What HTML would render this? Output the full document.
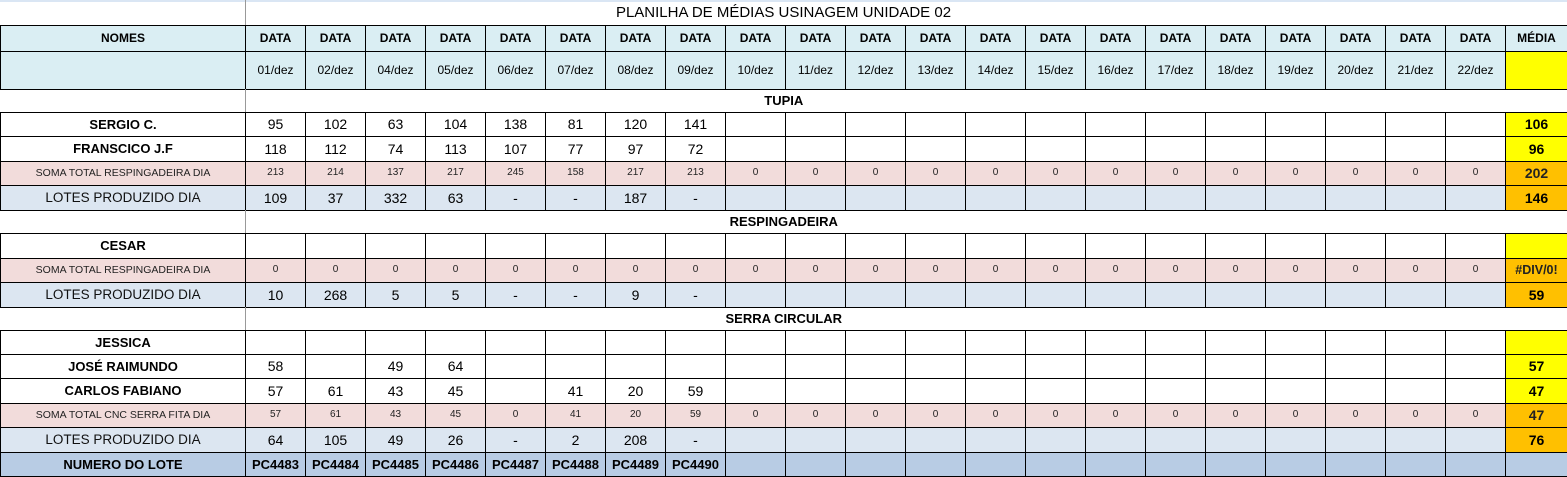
<!DOCTYPE html>
<html><head><meta charset="utf-8"><style>
*{margin:0;padding:0;box-sizing:border-box}
body{width:1567px;height:476px;overflow:hidden;background:#fff;font-family:"Liberation Sans",Arial,sans-serif;color:#000;position:relative}
table{border-collapse:collapse;table-layout:fixed;width:1567px;position:absolute;left:0;top:0}
td{border:1px solid #000;padding:0;text-align:center;vertical-align:middle;line-height:1;overflow:hidden;white-space:nowrap;font-size:14px}
.t td{border:none}
.h td{background:#DAEEF3;font-weight:bold;font-size:12px}
.d td{background:#DAEEF3;font-size:12px}
.sec td{border-left:none;border-right:none;font-weight:bold;font-size:13px}
.n td:first-child{font-weight:bold;font-size:13px}
.s td{background:#F2DCDB;font-size:10px;color:#222}
.s td:first-child{font-size:10.5px}
.l td{background:#DCE6F1;font-size:14px}
.l td:first-child{font-size:13.5px;color:#111}
.nl td{background:#B8CCE4;font-weight:bold;font-size:13px}
td.y{background:#FFFF00 !important;font-weight:bold;font-size:14px}
td.o{background:#FFC000 !important;font-weight:bold;font-size:14px}
td.o.sm{font-size:12.5px}
.vl{position:absolute;left:245px;width:1px;background:#999}
.title{position:absolute;left:0;width:1567px;top:5px;text-align:center;font-size:15px;line-height:16px}
</style></head><body>
<div style="position:absolute;left:0;top:0;width:1567px;height:2px;background:#DAE6F4"></div>
<table>
<colgroup><col style="width:245px"><col span="21" style="width:60px"><col style="width:62px"></colgroup>
<tr class="t" style="height:25px"><td colspan="22"></td><td style="border-right:1px solid #000"></td></tr>
<tr class="h" style="height:26px"><td>NOMES</td><td>DATA</td><td>DATA</td><td>DATA</td><td>DATA</td><td>DATA</td><td>DATA</td><td>DATA</td><td>DATA</td><td>DATA</td><td>DATA</td><td>DATA</td><td>DATA</td><td>DATA</td><td>DATA</td><td>DATA</td><td>DATA</td><td>DATA</td><td>DATA</td><td>DATA</td><td>DATA</td><td>DATA</td><td>MÉDIA</td></tr>
<tr class="d" style="height:38px"><td></td><td>01/dez</td><td>02/dez</td><td>04/dez</td><td>05/dez</td><td>06/dez</td><td>07/dez</td><td>08/dez</td><td>09/dez</td><td>10/dez</td><td>11/dez</td><td>12/dez</td><td>13/dez</td><td>14/dez</td><td>15/dez</td><td>16/dez</td><td>17/dez</td><td>18/dez</td><td>19/dez</td><td>20/dez</td><td>21/dez</td><td>22/dez</td><td class="y"></td></tr>
<tr class="sec" style="height:23px"><td colspan="23" style="border-right:1px solid #000">TUPIA</td></tr>
<tr class="n" style="height:24px"><td>SERGIO C.</td><td>95</td><td>102</td><td>63</td><td>104</td><td>138</td><td>81</td><td>120</td><td>141</td><td></td><td></td><td></td><td></td><td></td><td></td><td></td><td></td><td></td><td></td><td></td><td></td><td></td><td class="y">106</td></tr>
<tr class="n" style="height:25px"><td>FRANSCICO J.F</td><td>118</td><td>112</td><td>74</td><td>113</td><td>107</td><td>77</td><td>97</td><td>72</td><td></td><td></td><td></td><td></td><td></td><td></td><td></td><td></td><td></td><td></td><td></td><td></td><td></td><td class="y">96</td></tr>
<tr class="s" style="height:24px"><td>SOMA TOTAL RESPINGADEIRA DIA</td><td>213</td><td>214</td><td>137</td><td>217</td><td>245</td><td>158</td><td>217</td><td>213</td><td>0</td><td>0</td><td>0</td><td>0</td><td>0</td><td>0</td><td>0</td><td>0</td><td>0</td><td>0</td><td>0</td><td>0</td><td>0</td><td class="o">202</td></tr>
<tr class="l" style="height:25px"><td>LOTES PRODUZIDO DIA</td><td>109</td><td>37</td><td>332</td><td>63</td><td>-</td><td>-</td><td>187</td><td>-</td><td></td><td></td><td></td><td></td><td></td><td></td><td></td><td></td><td></td><td></td><td></td><td></td><td></td><td class="o">146</td></tr>
<tr class="sec" style="height:23px"><td colspan="23" style="border-right:1px solid #000">RESPINGADEIRA</td></tr>
<tr class="n" style="height:25px"><td>CESAR</td><td></td><td></td><td></td><td></td><td></td><td></td><td></td><td></td><td></td><td></td><td></td><td></td><td></td><td></td><td></td><td></td><td></td><td></td><td></td><td></td><td></td><td class="y"></td></tr>
<tr class="s" style="height:24px"><td>SOMA TOTAL RESPINGADEIRA DIA</td><td>0</td><td>0</td><td>0</td><td>0</td><td>0</td><td>0</td><td>0</td><td>0</td><td>0</td><td>0</td><td>0</td><td>0</td><td>0</td><td>0</td><td>0</td><td>0</td><td>0</td><td>0</td><td>0</td><td>0</td><td>0</td><td class="o sm">#DIV/0!</td></tr>
<tr class="l" style="height:25px"><td>LOTES PRODUZIDO DIA</td><td>10</td><td>268</td><td>5</td><td>5</td><td>-</td><td>-</td><td>9</td><td>-</td><td></td><td></td><td></td><td></td><td></td><td></td><td></td><td></td><td></td><td></td><td></td><td></td><td></td><td class="o">59</td></tr>
<tr class="sec" style="height:23px"><td colspan="23" style="border-right:1px solid #000">SERRA CIRCULAR</td></tr>
<tr class="n" style="height:24px"><td>JESSICA</td><td></td><td></td><td></td><td></td><td></td><td></td><td></td><td></td><td></td><td></td><td></td><td></td><td></td><td></td><td></td><td></td><td></td><td></td><td></td><td></td><td></td><td class="y"></td></tr>
<tr class="n" style="height:24px"><td>JOSÉ RAIMUNDO</td><td>58</td><td></td><td>49</td><td>64</td><td></td><td></td><td></td><td></td><td></td><td></td><td></td><td></td><td></td><td></td><td></td><td></td><td></td><td></td><td></td><td></td><td></td><td class="y">57</td></tr>
<tr class="n" style="height:25px"><td>CARLOS FABIANO</td><td>57</td><td>61</td><td>43</td><td>45</td><td></td><td>41</td><td>20</td><td>59</td><td></td><td></td><td></td><td></td><td></td><td></td><td></td><td></td><td></td><td></td><td></td><td></td><td></td><td class="y">47</td></tr>
<tr class="s" style="height:24px"><td>SOMA TOTAL CNC SERRA FITA DIA</td><td>57</td><td>61</td><td>43</td><td>45</td><td>0</td><td>41</td><td>20</td><td>59</td><td>0</td><td>0</td><td>0</td><td>0</td><td>0</td><td>0</td><td>0</td><td>0</td><td>0</td><td>0</td><td>0</td><td>0</td><td>0</td><td class="o">47</td></tr>
<tr class="l" style="height:25px"><td>LOTES PRODUZIDO DIA</td><td>64</td><td>105</td><td>49</td><td>26</td><td>-</td><td>2</td><td>208</td><td>-</td><td></td><td></td><td></td><td></td><td></td><td></td><td></td><td></td><td></td><td></td><td></td><td></td><td></td><td class="o">76</td></tr>
<tr class="nl" style="height:24px"><td>NUMERO DO LOTE</td><td>PC4483</td><td>PC4484</td><td>PC4485</td><td>PC4486</td><td>PC4487</td><td>PC4488</td><td>PC4489</td><td>PC4490</td><td></td><td></td><td></td><td></td><td></td><td></td><td></td><td></td><td></td><td></td><td></td><td></td><td></td><td></td></tr>
</table>
<div class="title">PLANILHA DE MÉDIAS USINAGEM UNIDADE 02</div>
<div class="vl" style="top:0;height:25px"></div>
<div class="vl" style="top:89px;height:23px"></div>
<div class="vl" style="top:210px;height:23px"></div>
<div class="vl" style="top:307px;height:23px"></div>
</body></html>
